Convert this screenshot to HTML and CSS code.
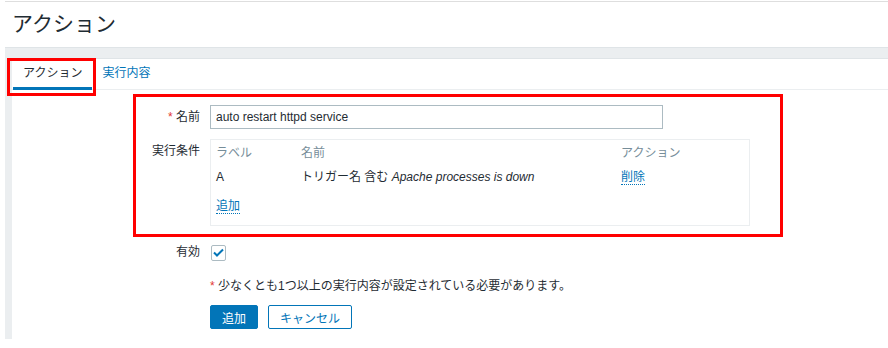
FILE: index.html
```
<!DOCTYPE html>
<html lang="ja">
<head>
  <meta charset="UTF-8" />
  <title>アクション</title>
  <link rel="stylesheet" href="styles.css">
</head>
<body>
  <div class="page-header">
    <h1>アクション</h1>
  </div>

  <div class="wrapper">
    <div class="content">
      <ul class="tabs">
        <li class="tab active">アクション</li>
        <li class="tab"><a href="#">実行内容</a></li>
      </ul>

      <form class="form-list">
        <div class="form-row">
          <label class="form-label" for="name"><span class="required">*</span> 名前</label>
          <div class="form-field">
            <input type="text" id="name" class="text-input" value="auto restart httpd service" />
          </div>
        </div>

        <div class="form-row">
          <div class="form-label">実行条件</div>
          <div class="form-field">
            <div class="conditions">
              <table class="cond-table">
                <tr class="cond-head">
                  <th class="col-label">ラベル</th>
                  <th class="col-name">名前</th>
                  <th>アクション</th>
                </tr>
                <tr>
                  <td>A</td>
                  <td>トリガー名 含む <em>Apache processes is down</em></td>
                  <td><a href="#" class="link-action">削除</a></td>
                </tr>
              </table>
              <a href="#" class="link-action add-link">追加</a>
            </div>
          </div>
        </div>

        <div class="form-row row-enabled">
          <label class="form-label" for="enabled">有効</label>
          <div class="form-field">
            <span class="checkbox">
              <svg width="11" height="9" viewBox="0 0 11 9"><path d="M1 4.5 L4 7.5 L10 1.5" fill="none" stroke="#0275b8" stroke-width="2"/></svg>
            </span>
          </div>
        </div>

        <div class="form-row row-note">
          <div class="form-label"></div>
          <div class="form-field"><span class="required">*</span> 少なくとも1つ以上の実行内容が設定されている必要があります。</div>
        </div>

        <div class="form-row row-buttons">
          <div class="form-label"></div>
          <div class="form-field buttons">
            <button type="button" class="btn btn-primary">追加</button>
            <button type="button" class="btn btn-alt">キャンセル</button>
          </div>
        </div>
      </form>
    </div>
  </div>

  <div class="mark mark-tab"></div>
  <div class="mark mark-form"></div>
</body>
</html>
```

FILE: styles.css
```
body {
  margin: 0;
  font-family: 'Liberation Sans', 'Noto Sans CJK JP', sans-serif;
  font-size: 12px;
  color: #1f2c33;
  background-color: #ffffff;
}

.page-header {
  margin-left: 5px;
  margin-top: 1px;
  border-top: 1px solid #dedede;
  height: 45px;
}

h1 {
  margin: 0;
  padding: 8px 0 0 7px;
  font-size: 21px;
  font-weight: normal;
  line-height: 28px;
  color: #1f2c33;
}

.wrapper {
  margin-left: 5px;
  background-color: #ebeef0;
  border-top: 1px solid #dfe4e7;
  padding: 10px 0 0 7px;
  height: 281px;
}

.content {
  background-color: #ffffff;
  border-top: 1px solid #dfe4e7;
  height: 280px;
}

.tabs {
  list-style: none;
  margin: 0;
  padding: 0 0 0 1px;
  display: flex;
  height: 30px;
  border-bottom: 1px solid #ebeef0;
}

.tab {
  padding: 0 10px;
  line-height: 28px;
  height: 28px;
  border-bottom: 3px solid transparent;
  margin-bottom: -1px;
}

.tab.active {
  border-bottom-color: #0275b8;
}

.tab a {
  color: #0275b8;
  text-decoration: none;
}

.form-list {
  padding-top: 15px;
}

.form-row {
  display: grid;
  grid-template-columns: 188px 1fr;
  column-gap: 10px;
  margin-bottom: 10px;
  line-height: 24px;
}

.form-label {
  text-align: right;
}

.required {
  color: #e33734;
}

.text-input {
  box-sizing: border-box;
  width: 453px;
  height: 24px;
  border: 1px solid #acbbc2;
  padding: 0 5px;
  font-family: inherit;
  font-size: 12px;
  color: #1f2c33;
  margin: 0;
}

.conditions {
  box-sizing: border-box;
  width: 540px;
  height: 87px;
  border: 1px solid #ebeef0;
  padding: 1px 5px 0;
}

.cond-table {
  border-collapse: collapse;
}

.cond-table th,
.cond-table td {
  padding: 0;
  text-align: left;
  font-weight: normal;
  height: 24px;
}

.cond-head th {
  color: #768d99;
}

.col-label {
  width: 85px;
}

.col-name {
  width: 320px;
}

.link-action {
  color: #0275b8;
  text-decoration: none;
  border-bottom: 1px dotted #0275b8;
  line-height: 14px;
  display: inline-block;
}

.add-link {
  margin-top: 10px;
}

.row-enabled {
  margin-top: 14px;
  align-items: center;
}

.checkbox {
  box-sizing: border-box;
  display: inline-flex;
  align-items: center;
  justify-content: center;
  width: 15px;
  height: 16px;
  border: 1px solid #acbbc2;
  border-radius: 2px;
  vertical-align: middle;
  margin-left: 1px;
}

.row-note {
  margin-top: 5px;
  margin-bottom: 7px;
}

.buttons {
  display: flex;
  gap: 10px;
}

.btn {
  box-sizing: border-box;
  height: 24px;
  font-family: inherit;
  font-size: 12px;
  border-radius: 2px;
  border: 1px solid #0275b8;
  padding: 0 11px;
  cursor: pointer;
}

.btn-primary {
  background-color: #0275b8;
  color: #ffffff;
}

.btn-alt {
  background-color: #ffffff;
  color: #0275b8;
}

.mark {
  position: absolute;
  border: 3px solid #ff0000;
  box-sizing: border-box;
  pointer-events: none;
}

.mark-tab {
  left: 7px;
  top: 58px;
  width: 89px;
  height: 38px;
}

.mark-form {
  left: 133px;
  top: 94px;
  width: 650px;
  height: 143px;
}
```
